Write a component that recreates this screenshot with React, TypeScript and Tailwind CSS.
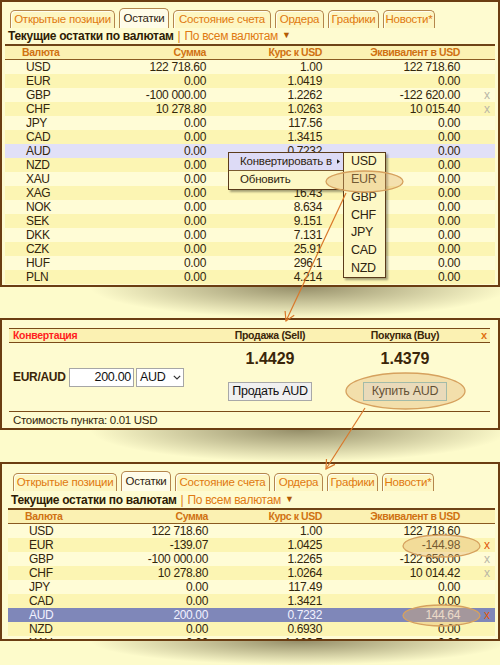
import React from "react";

type Row = { c: string; s: string; r: string; e: string; x?: "g" | "o"; hl?: "lav" | "blue" };

const rows1: Row[] = [
  { c: "USD", s: "122 718.60", r: "1.00", e: "122 718.60" },
  { c: "EUR", s: "0.00", r: "1.0419", e: "0.00" },
  { c: "GBP", s: "-100 000.00", r: "1.2262", e: "-122 620.00", x: "g" },
  { c: "CHF", s: "10 278.80", r: "1.0263", e: "10 015.40", x: "g" },
  { c: "JPY", s: "0.00", r: "117.56", e: "0.00" },
  { c: "CAD", s: "0.00", r: "1.3415", e: "0.00" },
  { c: "AUD", s: "0.00", r: "0.7232", e: "0.00", hl: "lav" },
  { c: "NZD", s: "0.00", r: "0.6910", e: "0.00" },
  { c: "XAU", s: "0.00", r: "1 187.3", e: "0.00" },
  { c: "XAG", s: "0.00", r: "16.43", e: "0.00" },
  { c: "NOK", s: "0.00", r: "8.634", e: "0.00" },
  { c: "SEK", s: "0.00", r: "9.151", e: "0.00" },
  { c: "DKK", s: "0.00", r: "7.131", e: "0.00" },
  { c: "CZK", s: "0.00", r: "25.91", e: "0.00" },
  { c: "HUF", s: "0.00", r: "296.1", e: "0.00" },
  { c: "PLN", s: "0.00", r: "4.214", e: "0.00" },
];

const rows3: Row[] = [
  { c: "USD", s: "122 718.60", r: "1.00", e: "122 718.60" },
  { c: "EUR", s: "-139.07", r: "1.0425", e: "-144.98", x: "o" },
  { c: "GBP", s: "-100 000.00", r: "1.2265", e: "-122 650.00", x: "g" },
  { c: "CHF", s: "10 278.80", r: "1.0264", e: "10 014.42", x: "g" },
  { c: "JPY", s: "0.00", r: "117.49", e: "0.00" },
  { c: "CAD", s: "0.00", r: "1.3421", e: "0.00" },
  { c: "AUD", s: "200.00", r: "0.7232", e: "144.64", x: "o", hl: "blue" },
  { c: "NZD", s: "0.00", r: "0.6930", e: "0.00" },
  { c: "XAU", s: "0.00", r: "1 160.7", e: "0.00" },
];

const TAB_NAMES = ["Открытые позиции", "Остатки", "Состояние счета", "Ордера", "Графики", "Новости*"];

function Tabs({ widths, h }: { widths: string[]; h: string }) {
  return (
    <div className={`flex items-end gap-[4px] pl-[5px] ${h}`}>
      {TAB_NAMES.map((t, i) => {
        const active = i === 1;
        return (
          <div
            key={t}
            className={`${widths[i]} whitespace-nowrap flex items-center justify-center rounded-t-[5px] border border-b-0 border-[#b4864c] shadow-[inset_1px_1px_0_#fffef0] text-[11.5px] tracking-[-0.25px] leading-none ${
              active ? "h-[20px] bg-[#fffce8] text-[#2f2410]" : "h-[18px] bg-[#fdf6c2] text-[#e0790f]"
            }`}
          >
            {t}
          </div>
        );
      })}
    </div>
  );
}

function Title({ h }: { h: string }) {
  return (
    <div className={`${h} whitespace-nowrap flex items-center pl-[3px] border-b-2 border-[#6e4316] text-[12px] tracking-[-0.3px]`}>
      <span className="font-bold text-[#2e1c04]">Текущие остатки по валютам</span>
      <span className="text-[#e07a12] ml-[4px]">|</span>
      <span className="text-[#e07a12] ml-[4px]">По всем валютам</span>
      <span className="text-[#b35a04] text-[9px] ml-[4px]">▼</span>
    </div>
  );
}

function Header({ cols }: { cols: string }) {
  return (
    <div className={`grid ${cols} whitespace-nowrap h-[14px] leading-[13px] text-[10.5px] font-bold tracking-[-0.4px] text-[#d07212] bg-[#fbf1b2] border-b border-[#8a5a20]`}>
      <div className="pl-[17px]">Валюта</div>
      <div className="text-right">Сумма</div>
      <div className="text-right">Курс к USD</div>
      <div className="text-right">Эквивалент в USD</div>
      <div />
    </div>
  );
}

function DataRow({ r, i, cols }: { r: Row; i: number; cols: string }) {
  const bg =
    r.hl === "lav"
      ? "bg-[#e1e0f7]"
      : r.hl === "blue"
      ? "bg-[#7f87b9] text-[#f2f2ff]"
      : i % 2 === 0
      ? "bg-[#fffcd6]"
      : "bg-[#fcf5b3]";
  const xc = r.x === "o" ? "text-[#e0570a]" : "text-[#b9b6a6]";
  return (
    <div className={`grid ${cols} whitespace-nowrap h-[14px] leading-[14px] text-[12px] tracking-[-0.35px] ${bg}`}>
      <div className="pl-[21px]">{r.c}</div>
      <div className="text-right">{r.s}</div>
      <div className="text-right">{r.r}</div>
      <div className="text-right">{r.e}</div>
      <div className={`pl-[24px] ${xc}`}>{r.x ? "x" : ""}</div>
    </div>
  );
}

function ContextMenu() {
  const sub = ["USD", "EUR", "GBP", "CHF", "JPY", "CAD", "NZD"];
  return (
    <>
      <div className="absolute left-[226px] top-[150px] w-[117px] border border-[#5b3b1b] bg-[#fdf8c6] shadow-[2px_2px_2px_rgba(0,0,0,0.35)] text-[11.5px] tracking-[-0.2px] text-[#2f2410] whitespace-nowrap">
        <div className="h-[18px] flex items-center pl-[11px] pr-[4px] bg-[#dddbf6] border-b border-[#7a5a30]">
          <span>Конвертировать в</span>
          <svg width="5" height="7" viewBox="0 0 5 7" className="ml-[5px]">
            <path d="M0 0 L5 3.5 L0 7 Z" fill="#1a1a1a" />
          </svg>
        </div>
        <div className="h-[18px] flex items-center pl-[11px]">Обновить</div>
      </div>
      <div className="absolute left-[341px] top-[150px] w-[43px] h-[126px] border border-[#5b3b1b] bg-[#fdf8c6] shadow-[2px_2px_2px_rgba(0,0,0,0.35)] flex flex-col text-[12.5px] tracking-[-0.3px] text-[#2f2410]">
        {sub.map((s) => (
          <div key={s} className="h-[17.7px] flex items-center pl-[7px]">
            {s}
          </div>
        ))}
      </div>
    </>
  );
}

function Panel1() {
  const cols = "grid-cols-[103px_98px_116px_138px_1fr]";
  return (
    <div className="relative border-2 border-[#6b3d12] bg-[#fefbd0] pt-[6px] px-[3px] pb-[1px]">
      <Tabs h="h-[20px]" widths={["w-[105px]", "w-[50px]", "w-[98px]", "w-[49px]", "w-[51px]", "w-[52px]"]} />
      <Title h="h-[18px]" />
      <Header cols={cols} />
      {rows1.map((r, i) => (
        <DataRow key={r.c} r={r} i={i} cols={cols} />
      ))}
      <ContextMenu />
    </div>
  );
}

function Panel2() {
  return (
    <div className="border-2 border-[#6b3d12] bg-[#fefbd0] pt-[8px] pl-[7px] pr-[8px] whitespace-nowrap">
      <div className="h-[15px] flex items-center border-y border-[#7a4a18] bg-[#fbf1b2] text-[10.5px] font-bold tracking-[-0.3px] text-[#3a2508]">
        <div className="w-[206px] pl-[4px] text-[#ff1e1e]">Конвертация</div>
        <div className="w-[110px] text-center">Продажа (Sell)</div>
        <div className="w-[15px]" />
        <div className="w-[130px] text-center">Покупка (Buy)</div>
        <div className="flex-1 pl-[11px] text-[#e07010] text-[11px]">x</div>
      </div>
      <div className="h-[68px] flex">
        <div className="w-[206px] pt-[25px] pl-[4px] flex items-start">
          <div className="w-[56px] h-[19px] leading-[19px] text-[12px] font-bold tracking-[-0.3px] text-[#3a2508]">EUR/AUD</div>
          <div className="w-[65px] h-[19px] border border-[#a6a6a6] bg-white text-right pr-[2px] leading-[17px] text-[12.5px] tracking-[-0.3px] text-[#111]">
            200.00
          </div>
          <div className="ml-[2px] w-[48px] h-[19px] border border-[#a6a6a6] bg-white flex items-center pl-[3px] text-[12.5px] tracking-[-0.3px] text-[#111]">
            <span>AUD</span>
            <svg width="8" height="5" viewBox="0 0 8 5" className="ml-[7px]">
              <path d="M0.8 0.8 L4 4 L7.2 0.8" fill="none" stroke="#333" strokeWidth="1.2" />
            </svg>
          </div>
        </div>
        <div className="w-[110px] flex flex-col items-center pt-[6px]">
          <div className="h-[20px] leading-[20px] text-[16px] font-bold text-[#3a2508]">1.4429</div>
          <div className="mt-[13px] w-[84px] h-[19px] border border-[#a8a8a8] bg-[#f0f0f0] flex items-center justify-center text-[12.5px] tracking-[-0.3px] text-[#111]">
            Продать AUD
          </div>
        </div>
        <div className="w-[15px]" />
        <div className="w-[130px] flex flex-col items-center pt-[6px]">
          <div className="h-[20px] leading-[20px] text-[16px] font-bold text-[#3a2508]">1.4379</div>
          <div className="mt-[13px] w-[84px] h-[19px] border border-[#7cc0cc] bg-[#eef2e8] flex items-center justify-center text-[12.5px] tracking-[-0.3px] text-[#111]">
            Купить AUD
          </div>
        </div>
      </div>
      <div className="h-[17px] leading-[16px] border-t border-[#7a4a18] pl-[4px] text-[11.5px] tracking-[-0.3px] text-[#33260c]">
        Стоимость пункта: 0.01 USD
      </div>
    </div>
  );
}

function Panel3() {
  const cols = "grid-cols-[100px_100px_114px_138px_1fr]";
  return (
    <div className="h-[179px] overflow-hidden border-2 border-[#6b3d12] bg-[#fefbd0] pt-[8px] pl-[6px] pr-[3px]">
      <Tabs h="h-[19px]" widths={["w-[104px]", "w-[50px]", "w-[95px]", "w-[49px]", "w-[51px]", "w-[52px]"]} />
      <Title h="h-[19px]" />
      <Header cols={cols} />
      {rows3.map((r, i) => (
        <DataRow key={r.c} r={r} i={i} cols={cols} />
      ))}
    </div>
  );
}

function Shadow({ h }: { h: string }) {
  return (
    <div
      className={`${h} bg-[radial-gradient(ellipse_42%_100%_at_60%_0%,rgba(80,70,40,0.6),rgba(80,70,40,0)_100%)]`}
    />
  );
}

function Overlay() {
  const stroke = "#d9782a";
  const ef = "rgba(226,180,110,0.38)";
  const es = "#d6a15e";
  return (
    <svg className="absolute left-0 top-0 pointer-events-none" width="500" height="665" viewBox="0 0 500 665">
      <ellipse cx="364.5" cy="181.5" rx="38.5" ry="10.5" fill={ef} stroke={es} strokeWidth="1.3" />
      <line x1="346" y1="193" x2="286" y2="321" stroke={stroke} strokeWidth="1.2" />
      <polyline points="294.2,315.2 286,321 285.1,311" fill="none" stroke={stroke} strokeWidth="1.2" />
      <ellipse cx="405.5" cy="391" rx="59.5" ry="18" fill={ef} stroke={es} strokeWidth="1.3" />
      <line x1="365" y1="408" x2="326" y2="469" stroke={stroke} strokeWidth="1.2" />
      <polyline points="334.9,464.4 326,469 326.5,459" fill="none" stroke={stroke} strokeWidth="1.2" />
      <ellipse cx="441.5" cy="546" rx="38.5" ry="11" fill={ef} stroke={es} strokeWidth="1.3" />
      <ellipse cx="441.5" cy="615.5" rx="38.5" ry="10.5" fill={ef} stroke={es} strokeWidth="1.3" />
    </svg>
  );
}

export default function App() {
  return (
    <div className="relative w-[500px] h-[665px] overflow-hidden bg-[#fdfbcb] font-['Liberation_Sans',Arial,sans-serif] text-[#33260c]">
      <Panel1 />
      <Shadow h="h-[31px]" />
      <Panel2 />
      <Shadow h="h-[32px]" />
      <Panel3 />
      <Shadow h="h-[24px]" />
      <Overlay />
    </div>
  );
}
